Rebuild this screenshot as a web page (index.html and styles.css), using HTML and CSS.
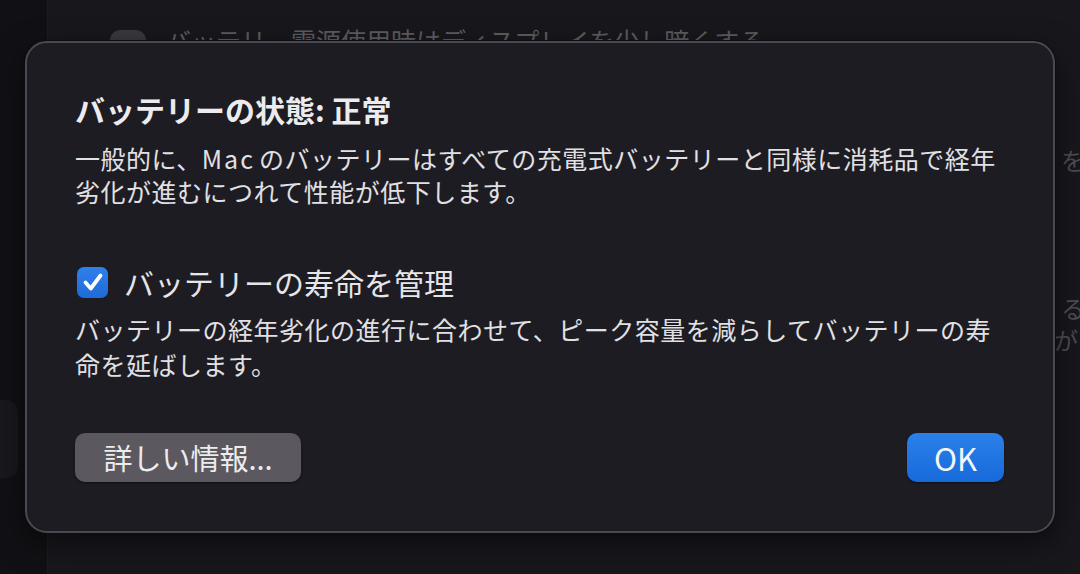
FILE: index.html
```html
<!DOCTYPE html>
<html lang="ja">
<head>
<meta charset="utf-8">
<link rel="stylesheet" href="styles.css">
</head>
<body>
<div class="app">
  <aside class="sidebar">
    <div class="side-item"></div>
  </aside>
  <main class="main">
    <div class="bg-row">
      <span class="bg-toggle"></span>
      <span class="bg-text">バッテリー電源使用時はディスプレイを少し暗くする</span>
    </div>
    <div class="bg-right bg-r1">を</div>
    <div class="bg-right bg-r2">る</div>
    <div class="bg-right bg-r3">がな</div>
  </main>
</div>

<div class="dialog">
  <h1 class="title">バッテリーの状態: 正常</h1>
  <p class="text">一般的に、<span class="latin">Mac</span>のバッテリーはすべての充電式バッテリーと同様に消耗品で経年<br>劣化が進むにつれて性能が低下します。</p>
  <label class="check-row">
    <span class="checkbox">
      <svg viewBox="0 0 30 30" width="30" height="30"><path d="M7.5 15.5 L12.8 21.5 L22.5 8.5" fill="none" stroke="#fff" stroke-width="3.8" stroke-linecap="round" stroke-linejoin="round"/></svg>
    </span>
    <span class="check-label">バッテリーの寿命を管理</span>
  </label>
  <p class="text desc">バッテリーの経年劣化の進行に合わせて、ピーク容量を減らしてバッテリーの寿<br>命を延ばします。</p>
  <div class="buttons">
    <button class="btn btn-gray">詳しい情報...</button>
    <button class="btn btn-blue">OK</button>
  </div>
</div>
</body>
</html>
```

FILE: styles.css
```css
* { box-sizing: border-box; }
html, body {
  margin: 0;
  padding: 0;
  width: 1080px;
  height: 574px;
  overflow: hidden;
  background: #141318;
  font-family: "Noto Sans CJK JP", "Noto Sans", sans-serif;
}
.app {
  display: flex;
  height: 574px;
}
.sidebar {
  width: 48px;
  background: #111014;
  border-right: 1px solid #1d1c21;
  padding-top: 400px;
}
.side-item {
  width: 18px;
  height: 78px;
  background: #19181d;
  border-radius: 0 12px 12px 0;
}
.main {
  flex: 1;
  background: #18171c;
  padding-top: 22px;
  display: flex;
  flex-direction: column;
  overflow: hidden;
}
.bg-row {
  display: flex;
  align-items: center;
  gap: 20px;
  padding-left: 62px;
  height: 36px;
}
.bg-toggle {
  width: 36px;
  height: 20px;
  border-radius: 10px;
  background: #3a393e;
}
.bg-text {
  font-size: 25px;
  color: #5d5c61;
  white-space: nowrap;
}
.bg-right {
  align-self: flex-end;
  font-size: 24px;
  color: #4e4d52;
  white-space: nowrap;
  line-height: 32px;
  margin-right: -5px;
}
.bg-r1 { margin-top: 86px; }
.bg-r2 { margin-top: 116px; }
.bg-r3 { margin-top: 0; margin-right: -22px; }

.dialog {
  position: absolute;
  left: 25px;
  top: 41px;
  width: 1030px;
  height: 492px;
  background: #1e1c23;
  border: 2px solid #4a494f;
  border-radius: 22px;
  box-shadow: 0 0 0 1px #0d0c10, 0 10px 30px rgba(0,0,0,0.55);
  padding: 47px 48px 0 48px;
  display: flex;
  flex-direction: column;
  color: #e4e3e6;
}
.title {
  margin: 0;
  font-size: 30px;
  line-height: 38px;
  font-weight: 700;
  color: #ececee;
}
.text {
  margin: 14px 0 0 0;
  font-size: 25px;
  line-height: 33px;
  letter-spacing: 0.5px;
  color: #e1e0e3;
}
.latin {
  letter-spacing: 2px;
  padding-right: 4px;
}
.check-row {
  display: flex;
  align-items: center;
  gap: 16px;
  margin-top: 56px;
  height: 36px;
}
.checkbox {
  width: 31px;
  height: 31px;
  margin-left: 2px;
  border-radius: 7px;
  background: linear-gradient(#2f80ea, #1f6bd8);
  display: flex;
  align-items: center;
  justify-content: center;
}
.checkbox svg { display: block; }
.check-label {
  font-size: 30px;
  line-height: 36px;
  color: #e6e5e8;
}
.desc {
  margin-top: 12px;
  line-height: 35px;
}
.buttons {
  display: flex;
  justify-content: space-between;
  margin-top: 51px;
}
.btn {
  height: 49px;
  border: none;
  border-radius: 10px;
  font-family: inherit;
  font-size: 29px;
  line-height: 49px;
  padding: 0;
  color: #ececee;
}
.btn-gray {
  width: 226px;
  background: #5b595f;
  box-shadow: 0 1px 2px rgba(0,0,0,0.5);
}
.btn-blue {
  width: 97px;
  margin-right: 1px;
  background: linear-gradient(#2b80ea, #176ad9);
  box-shadow: 0 1px 2px rgba(0,0,0,0.5);
  color: #f4f6fa;
  font-size: 31px;
}
```
